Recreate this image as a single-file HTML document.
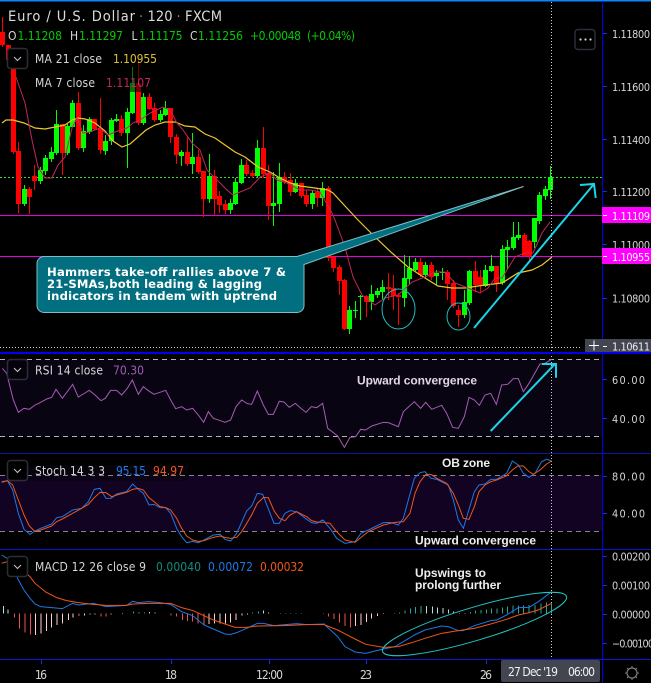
<!DOCTYPE html>
<html><head><meta charset="utf-8"><title>EUR/USD</title>
<style>
html,body{margin:0;padding:0;background:#000;width:651px;height:683px;overflow:hidden}
svg{display:block}
text{font-family:"DejaVu Sans Condensed","Liberation Sans",sans-serif;font-size:12px;fill:#d6d6d6}
text.a{font-size:10.8px;fill:#d6d6d6}
text.b{font-family:"Liberation Sans",sans-serif;font-size:12px;font-weight:bold;fill:#eee}
text.c{font-family:"DejaVu Sans",sans-serif;font-size:11.6px;font-weight:bold;fill:#fff}
text.g{fill:#0c0}
</style></head><body>
<svg width="651" height="683" viewBox="0 0 651 683" xmlns="http://www.w3.org/2000/svg" fill="none">
<rect width="651" height="683" fill="#000"/>
<rect y="0" width="651" height="1.5" fill="#0a84ff"/>
<!-- pane bands -->
<rect x="0" y="359" width="602" height="78" fill="#090412"/>
<rect x="0" y="475" width="602" height="56" fill="#130322"/>
<!-- hlines -->
<path d="M0 215.5H602M0 256.5H602" stroke="#e000e0" stroke-width="1" shape-rendering="crispEdges"/>
<path d="M0 177.5H602" stroke="#2fe02f" stroke-width="1" stroke-dasharray="2 2" shape-rendering="crispEdges"/>
<!-- candles -->
<g shape-rendering="crispEdges">
<path stroke="#f00" stroke-width="1" d="M2.5 17V47M8.5 47V66M13.5 60V154M18.5 142V213M29.5 187V214M34.5 165V190M62.5 124V175M78.5 92V150M94.5 119V130M100.5 98V154M121.5 115V136M138.5 57V125M149.5 93V110M154.5 103V122M170.5 108V143M176.5 134V164M187.5 137V166M198.5 150V174M203.5 171V217M214.5 170V215M219.5 191V213M225.5 200V214M246.5 160V176M252.5 170V178M263.5 127V178M268.5 165V220M284.5 172V184M290.5 173V196M301.5 183V198M306.5 190V207M317.5 189V207M328.5 186V261M333.5 256V272M339.5 265V295M344.5 279V330M366.5 295V317M388.5 273V300M393.5 275V310M398.5 293V325M420.5 258V277M431.5 262V280M447.5 270V300M453.5 280V308M458.5 305V327M475.5 261V292M480.5 270V293M496.5 266V292M524.5 233V257M529.5 240V262"/>
<path stroke="#f00" stroke-width="5" d="M2.5 32V45M8.5 45V60M13.5 66V152M18.5 151V204M29.5 189V197M34.5 176V181M62.5 124V153M78.5 103V148M94.5 119V129M100.5 128V150M121.5 119V133M138.5 83V123M149.5 97V109M154.5 108V120M170.5 108V137M176.5 137V155M187.5 152V164M198.5 157V172M203.5 171V199M214.5 176V199M219.5 196V205M225.5 204V210M246.5 165V174M252.5 173V176M263.5 148V174M268.5 173V206M284.5 177V182M290.5 180V192M301.5 183V196M306.5 195V204M317.5 192V198M328.5 188V258M333.5 257V268M339.5 267V281M344.5 280V329M366.5 296V302M388.5 287V289M393.5 288V296M398.5 295V297M420.5 262V275M431.5 265V277M447.5 272V284M453.5 283V306M458.5 310V315M475.5 271V285M480.5 277V285M496.5 266V283M524.5 235V256M529.5 241V256"/>
<path stroke="#0f0" stroke-width="1" d="M24.5 185V206M40.5 167V184M45.5 155V175M51.5 147V162M56.5 110V155M67.5 124V155M72.5 100V127M83.5 125V152M89.5 117V134M105.5 135V155M111.5 118V145M116.5 114V122M127.5 108V168M132.5 67V114M143.5 93V125M160.5 110V122M165.5 101V116M181.5 150V166M192.5 133V174M209.5 154V203M230.5 199V214M235.5 178V205M241.5 159V184M257.5 140V178M273.5 172V226M279.5 163V212M295.5 179V193M312.5 190V209M322.5 182V206M349.5 306V334M355.5 301V318M360.5 295V320M371.5 285V310M377.5 288V298M382.5 280V300M404.5 255V307M409.5 256V284M415.5 258V271M425.5 262V278M436.5 270V285M442.5 268V280M464.5 290V318M469.5 270V305M485.5 265V287M491.5 255V272M502.5 245V285M507.5 240V270M513.5 222V250M518.5 222V240M534.5 218V248M539.5 192V224M545.5 186V200M550.5 166V199"/>
<path stroke="#0f0" stroke-width="5" d="M24.5 189V204M40.5 170V181M45.5 158V171M51.5 152V159M56.5 124V153M67.5 126V153M72.5 103V127M83.5 131V148M89.5 119V132M105.5 141V151M111.5 120V141M116.5 119V121M127.5 112V133M132.5 83V113M143.5 97V123M160.5 114V120M165.5 108V115M181.5 152V156M192.5 157V164M209.5 176V199M230.5 203V210M235.5 182V204M241.5 165V183M257.5 148V176M273.5 203V206M279.5 177V204M295.5 183V192M312.5 193V204M322.5 188V198M349.5 310V329M355.5 310V311M360.5 296V297M371.5 294V302M377.5 291V295M382.5 287V292M404.5 278V298M409.5 268V279M415.5 262V270M425.5 265V275M436.5 273V276M442.5 272V273M464.5 302V315M469.5 271V303M485.5 270V286M491.5 266V271M502.5 249V283M507.5 247V250M513.5 237V248M518.5 235V238M534.5 218V242M539.5 195V221M545.5 189V196M550.5 177V190"/>
</g>
<!-- MA 21 -->
<path stroke="#eec62e" stroke-width="1.2" d="M2 123L6 120L13 120L24 123L35 128L45 129L55 127L65 125L72 120L78 118L85 119L95 123L105 131L113 141L122 147L130 144L138 137L146 130L155 125L165 122L175 122L185 126L195 127L205 134L215 138L225 145L235 152L245 157L258 167L270 172L280 178L290 183L300 186L315 188L328 190L333 193L345 206L358 220L375 237L392 253L408 267L425 278L438 286L452 288L465 288L485 285L502 283L518 273L532 270L542 265L552 257"/>
<!-- MA 7 -->
<path stroke="#c2265f" stroke-width="1" d="M16 77L25 103L32 140L38 167L45 178L52 178L58 165L65 157L72 128L77 118L83 133L90 132L100 128L108 135L115 132L127 128L133 123L140 120L150 113L163 107L170 110L177 123L183 130L192 143L200 150L207 170L217 180L227 190L233 195L240 192L250 188L260 177L270 173L277 180L287 183L300 190L310 190L320 192L332 213L335 220L345 247L353 277L362 295L375 305L385 298L398 295L412 282L425 277L435 272L445 272L455 283L468 288L480 293L488 288L495 278L502 278L515 257L525 253L533 253L542 233L550 222"/>
<!-- crosshair -->
<path d="M551.5 2V660" stroke="#cfcfcf" stroke-width="1" stroke-dasharray="1 2" shape-rendering="crispEdges"/>
<path d="M0 347.5H582" stroke="#cfcfcf" stroke-width="1" stroke-dasharray="1 2" shape-rendering="crispEdges"/>
<!-- callout -->
<path d="M297 256.5L523.5 186.5L304 264.5V305.5a7 7 0 0 1-7 7H44a7 7 0 0 1-7-7V263.5a7 7 0 0 1 7-7Z" fill="#026f80" stroke="#7fbfc4" stroke-width="1"/>
<text class="c" x="47" y="276" textLength="239" lengthAdjust="spacing">Hammers take-off rallies above 7 &amp;</text>
<text class="c" x="47" y="288" textLength="215" lengthAdjust="spacing">21-SMAs,both leading &amp; lagging</text>
<text class="c" x="47" y="300" textLength="230" lengthAdjust="spacing">indicators in tandem with uptrend</text>
<!-- circles -->
<ellipse cx="398.5" cy="309" rx="16.5" ry="20" stroke="#22bcc4" stroke-width="1"/>
<ellipse cx="458.5" cy="316.5" rx="11.5" ry="13.5" stroke="#22bcc4" stroke-width="1"/>
<!-- arrow main -->
<path d="M474 328L594 184M580 185L594 184L595.7 198" stroke="#19d5e8" stroke-width="2"/>
<!-- RSI -->
<path d="M0 359.5H602M0 436.5H602" stroke="#b4b4b4" stroke-width="1" stroke-dasharray="5 4" shape-rendering="crispEdges"/>
<path transform="translate(0,220) scale(.33333)" stroke="#a45cb4" stroke-width="3" d="M7 445L20 460L40 540L55 577L72 565L88 568L105 555L120 548L140 537L155 532L168 508L187 535L218 493L235 531L250 522L268 511L285 525L303 542L316 535L332 511L350 511L365 525L382 505L397 480L415 523L430 500L445 512L462 523L480 517L497 511L512 540L527 566L545 560L560 570L578 565L595 585L611 607L625 575L640 595L658 601L675 607L692 600L708 560L725 540L742 551L755 553L772 513L790 555L805 583L820 583L838 544L852 546L868 562L886 550L903 565L918 577L934 560L950 563L968 550L975 585"/>
<path transform="translate(325,220) scale(.33333)" stroke="#a45cb4" stroke-width="3" d="M0 585L8 625L38 648L58 682L75 652L92 650L107 628L122 630L140 618L175 607L190 608L220 620L235 575L268 545L287 565L302 547L320 568L350 556L365 580L383 622L400 625L418 590L432 532L448 540L463 556L480 525L497 520L514 553L530 495L548 493L565 476L580 476L595 515L612 490L645 432L660 430L680 418"/>
<path d="M490.7 431L555 364M542 364H556V377.7" stroke="#19d5e8" stroke-width="2"/>
<text class="b" x="357" y="384.5" style="fill:#e2d4e6" textLength="120" lengthAdjust="spacing">Upward convergence</text>
<!-- Stoch -->
<rect x="28" y="465" width="160" height="16" fill="#0a0410" opacity=".7"/>
<path d="M0 475.5H602M0 531.5H602" stroke="#8a8094" stroke-width="1" stroke-dasharray="5 4" shape-rendering="crispEdges"/>
<g transform="translate(0,450) scale(.33333)" stroke-width="3">
<path stroke="#1e78e6" d="M5 95L22 92L38 120L55 190L72 238L90 253L105 243L122 235L155 222L170 203L187 200L218 180L245 175L265 155L283 118L300 115L318 145L333 145L350 132L380 125L398 102L415 118L430 130L447 165L462 163L480 173L497 173L512 190L530 235L545 260L560 278L578 274L595 278L612 270L640 255L660 253L675 268L692 273L710 250L740 183L755 168L772 130L788 133L822 220L838 220L855 190L870 182L890 185L920 208L935 218L950 220L968 210L975 215"/>
<path stroke="#f0561a" d="M5 97L22 92L38 105L55 150L72 195L88 228L105 245L122 240L155 228L170 215L187 207L218 190L245 175L265 163L283 143L300 127L318 128L335 140L350 135L380 127L398 118L415 115L430 120L447 143L462 155L480 170L497 173L512 180L530 205L545 235L560 258L578 270L595 274L612 272L640 262L660 258L675 262L692 265L710 262L725 245L755 195L772 160L790 143L805 143L822 182L838 205L855 212L870 195L890 185L920 200L935 212L950 216L975 217"/>
</g>
<g transform="translate(325,450) scale(.33333)" stroke-width="3">
<path stroke="#1e78e6" d="M0 218L15 235L35 265L60 280L90 275L108 250L130 240L175 218L195 217L220 225L235 205L250 150L268 85L285 68L300 65L318 85L335 88L370 105L385 150L400 210L415 235L430 185L448 125L462 105L480 102L497 88L515 88L545 70L562 33L580 45L595 70L612 82L630 70L650 35L665 28L680 33"/>
<path stroke="#f0561a" d="M0 218L15 220L35 245L60 270L90 277L108 262L130 245L175 225L205 218L235 215L255 190L270 130L285 95L303 73L318 73L335 85L365 100L385 130L400 165L415 205L432 208L448 170L462 125L480 105L497 95L515 90L545 77L562 60L578 48L595 48L612 65L625 73L645 60L665 42L680 33"/>
</g>
<text class="b" x="442" y="467" textLength="48" lengthAdjust="spacing">OB zone</text>
<text class="b" x="415" y="544.5" textLength="121" lengthAdjust="spacing">Upward convergence</text>
<!-- MACD hist -->
<g transform="translate(0,450) scale(.33333)" stroke-width="3" shape-rendering="crispEdges">
<path stroke="#b2dfdb" d="M10 490V468M24 490V478M449 490V486M465 490V487M806 490V488M790 490V482"/>
<path stroke="#26a69a" d="M400 490V484M417 490V486M433 490V488M758 490V488M775 490V484M842 491V489M858 491V489M872 491V489M888 491V489M904 491V489M970 491V489"/>
<path stroke="#ef5350" d="M43 490V503M59 490V535M75 490V547M91 490V553M237 490V498M303 490V500M318 490V500M513 490V496M530 490V500M547 490V510M562 490V513M578 490V515M594 490V520M612 490V523"/>
<path stroke="#ffcdd2" d="M107 490V555M123 490V550M139 490V543M155 490V533M171 490V525M187 490V520M205 490V510M219 490V503M253 490V497M270 490V493M285 490V493M333 490V494M367 490V492M627 490V522M643 490V520M660 490V520M676 490V521M692 490V518M708 490V510M726 490V496M742 490V494"/>
</g>
<g transform="translate(325,450) scale(.33333)" stroke-width="3" shape-rendering="crispEdges">
<path stroke="#ef5350" d="M10 490V500M27 490V507M43 490V518M60 490V528M77 490V533"/>
<path stroke="#ffcdd2" d="M92 490V528M108 490V525M124 490V516M140 490V506M157 490V498M175 490V492"/>
<path stroke="#26a69a" d="M208 490V492M224 490V488M240 490V481M256 490V475M272 490V471M288 490V468M436 490V486M452 490V482M468 490V480M484 490V478M500 490V476M516 490V475M532 490V472M548 490V470M564 490V466M580 490V466M596 490V467M612 490V465M630 490V465M648 490V460M664 490V458M680 490V460"/>
<path stroke="#b2dfdb" d="M305 490V468M322 490V470M338 490V472M354 490V474M370 490V478M386 490V484M403 491V489M420 491V489"/>
</g>
<!-- MACD lines -->
<g transform="translate(0,450) scale(.33333)" stroke-width="3">
<path stroke="#1e78e6" d="M5 315L22 325L38 345L55 390L72 420L90 445L105 462L122 470L155 473L187 476L218 460L235 465L280 460L318 470L380 466L398 454L415 458L445 455L480 458L512 463L545 485L578 497L612 525L640 537L675 552L692 553L710 548L740 535L772 520L790 520L822 527L890 521L920 524L975 522"/>
<path stroke="#f0561a" d="M5 340L22 335L55 350L90 380L105 400L137 426L170 443L200 452L235 458L280 463L318 466L380 466L398 462L445 460L512 460L545 473L580 482L612 497L640 510L675 522L705 532L740 532L772 528L850 527L920 524L975 524"/>
</g>
<g transform="translate(325,450) scale(.33333)" stroke-width="3">
<path stroke="#1e78e6" d="M0 525L38 560L60 590L90 606L122 610L175 597L210 590L235 575L268 555L300 540L350 528L370 530L400 542L415 542L448 527L497 512L515 510L545 495L580 473L612 472L640 455L680 425"/>
<path stroke="#f0561a" d="M0 525L38 540L90 567L122 583L175 592L220 590L260 578L300 565L350 550L400 542L448 535L497 522L545 508L580 495L612 488L640 480L680 460"/>
</g>
<ellipse cx="474.5" cy="624" rx="96" ry="16.5" transform="rotate(-16.6 474.5 624)" stroke="#22c4c4" stroke-width="1"/>
<text class="b" x="415" y="577" textLength="71" lengthAdjust="spacing">Upswings to</text>
<text class="b" x="415" y="589" textLength="86" lengthAdjust="spacing">prolong further</text>
<!-- separators -->
<g shape-rendering="crispEdges">
<rect x="0" y="352" width="651" height="2" fill="#0000f0"/>
<rect x="0" y="453" width="651" height="1" fill="#0c16a8"/>
<rect x="0" y="549" width="651" height="1" fill="#0c16d8"/>
<rect x="0" y="659" width="651" height="1" fill="#0c16d8"/>
<rect x="602" y="1" width="1" height="682" fill="#0000f0"/>
<path stroke="#1a2ce0" stroke-width="1" d="M603 33.5H607M603 86.5H607M603 139.5H607M603 191.5H607M603 244.5H607M603 298.5H607M603 379.5H607M603 418.5H607M603 476.5H607M603 513.5H607M603 556.5H607M603 585.5H607M603 614.5H607M603 643.5H607M41.5 660V664M171.5 660V664M269.5 660V664M366.5 660V664M486.5 660V664"/>
</g>
<!-- legend dim -->
<rect x="30" y="50" width="130" height="42" fill="#000" opacity=".55"/>
<text x="8" y="21" style="font-size:14.5px;fill:#dcdcdc" textLength="127" lengthAdjust="spacing">Euro / U.S. Dollar</text>
<text x="139" y="21" style="font-size:14.5px;fill:#888">·</text>
<text x="147.5" y="21" style="font-size:14.5px;fill:#dcdcdc" textLength="25" lengthAdjust="spacing">120</text>
<text x="176.5" y="21" style="font-size:14.5px;fill:#888">·</text>
<text x="185" y="21" style="font-size:14.5px;fill:#dcdcdc" textLength="37" lengthAdjust="spacing">FXCM</text>
<text x="8" y="40">O</text><text class="g" x="17.5" y="40" textLength="44.5" lengthAdjust="spacing">1.11208</text>
<text x="70" y="40">H</text><text class="g" x="79" y="40" textLength="44" lengthAdjust="spacing">1.11297</text>
<text x="131.5" y="40">L</text><text class="g" x="139" y="40" textLength="43.5" lengthAdjust="spacing">1.11175</text>
<text x="190" y="40">C</text><text class="g" x="198" y="40" textLength="45" lengthAdjust="spacing">1.11256</text>
<text class="g" x="250" y="40" textLength="51" lengthAdjust="spacing">+0.00048</text>
<text class="g" x="307" y="40" textLength="48" lengthAdjust="spacing">(+0.04%)</text>
<g stroke="#2a2e39" stroke-width="1.5">
<rect x="7.5" y="48.5" width="20" height="20" rx="3" fill="#000"/>
<rect x="7.5" y="359.5" width="20" height="20" rx="3" fill="#05020c"/>
<rect x="7.5" y="460.5" width="20" height="20" rx="3" fill="#000"/>
<rect x="7.5" y="556.5" width="20" height="20" rx="3" fill="#000"/>
<rect x="575" y="29.5" width="20" height="20" rx="3" fill="#000"/>
</g>
<path d="M14 57L17.5 60.5L21 57M14 368L17.5 371.5L21 368M14 469L17.5 472.5L21 469M14 565L17.5 568.5L21 565" stroke="#c8c8c8" stroke-width="1"/>
<g fill="#d0d0d0"><circle cx="580.5" cy="39.5" r="1.1"/><circle cx="585.5" cy="39.5" r="1.1"/><circle cx="590.5" cy="39.5" r="1.1"/></g>
<text x="35" y="63" textLength="67" lengthAdjust="spacing">MA 21 close</text>
<text x="113" y="63" style="fill:#d9c035" textLength="44" lengthAdjust="spacing">1.10955</text>
<text x="35" y="87" textLength="60" lengthAdjust="spacing">MA 7 close</text>
<text x="106" y="87" style="fill:#c2265f" textLength="45" lengthAdjust="spacing">1.11107</text>
<text x="35" y="374.5" textLength="68" lengthAdjust="spacing">RSI 14 close</text>
<text x="113" y="374.5" style="fill:#9c5cb0" textLength="31" lengthAdjust="spacing">70.30</text>
<text x="35" y="475" textLength="70" lengthAdjust="spacing">Stoch 14 3 3</text>
<text x="116" y="475" style="fill:#1e78e6" textLength="30" lengthAdjust="spacing">95.15</text>
<text x="153" y="475" style="fill:#f0561a" textLength="31" lengthAdjust="spacing">94.97</text>
<text x="35" y="571" textLength="111" lengthAdjust="spacing">MACD 12 26 close 9</text>
<text x="156" y="571" style="fill:#0f8d80" textLength="45" lengthAdjust="spacing">0.00040</text>
<text x="208" y="571" style="fill:#1e78e6" textLength="45" lengthAdjust="spacing">0.00072</text>
<text x="260" y="571" style="fill:#f0561a" textLength="44" lengthAdjust="spacing">0.00032</text>
<!-- price axis -->
<text class="a" x="612" y="38" textLength="38" lengthAdjust="spacing">1.11800</text>
<text class="a" x="612" y="91" textLength="38" lengthAdjust="spacing">1.11600</text>
<text class="a" x="612" y="144" textLength="38" lengthAdjust="spacing">1.11400</text>
<text class="a" x="612" y="196" textLength="38" lengthAdjust="spacing">1.11200</text>
<text class="a" x="612" y="249" textLength="38" lengthAdjust="spacing">1.11000</text>
<text class="a" x="612" y="302.5" textLength="38" lengthAdjust="spacing">1.10800</text>
<rect x="602" y="207" width="49" height="16" fill="#f0f"/>
<rect x="602" y="248" width="49" height="16" fill="#f0f"/>
<path d="M603 215.5H607M603 256.5H607" stroke="#fff" stroke-width="1"/>
<text class="a" x="612" y="220" textLength="38" lengthAdjust="spacing" style="fill:#fff">1.11109</text>
<text class="a" x="612" y="261" textLength="38" lengthAdjust="spacing" style="fill:#fff">1.10955</text>
<rect x="585" y="339" width="66" height="13" fill="#434651"/>
<path d="M589 345.5H599M593.9 340.5V350.5" stroke="#fff" stroke-width="1.2" shape-rendering="crispEdges"/>
<path d="M603 346.5H607" stroke="#fff" stroke-width="1"/>
<text class="a" x="612" y="350.5" textLength="38" lengthAdjust="spacing" style="fill:#eee">1.10611</text>
<text class="a" x="612" y="384" textLength="33" lengthAdjust="spacing">60.00</text>
<text class="a" x="612" y="423" textLength="33" lengthAdjust="spacing">40.00</text>
<text class="a" x="612" y="480.5" textLength="33" lengthAdjust="spacing">80.00</text>
<text class="a" x="612" y="517.5" textLength="33" lengthAdjust="spacing">40.00</text>
<text class="a" x="612" y="560.5" textLength="38" lengthAdjust="spacing">0.00200</text>
<text class="a" x="612" y="589.5" textLength="38" lengthAdjust="spacing">0.00100</text>
<text class="a" x="612" y="618.5" textLength="38" lengthAdjust="spacing">0.00000</text>
<text class="a" x="612" y="647.5" textLength="42" lengthAdjust="spacing">−0.00100</text>
<!-- time axis -->
<text x="35" y="679" textLength="12" lengthAdjust="spacing">16</text>
<text x="165" y="679" textLength="12" lengthAdjust="spacing">18</text>
<text x="256" y="679" textLength="27" lengthAdjust="spacing">12:00</text>
<text x="360" y="679" textLength="12" lengthAdjust="spacing">23</text>
<text x="480" y="679" textLength="12" lengthAdjust="spacing">26</text>
<rect x="501" y="660" width="99" height="22" rx="2" fill="#434651"/>
<text x="508" y="676" style="fill:#f0f0f0" textLength="50" lengthAdjust="spacing">27 Dec '19</text>
<text x="568" y="676" style="fill:#f0f0f0" textLength="27" lengthAdjust="spacing">06:00</text>
<!-- gear -->
<circle cx="632" cy="673" r="5" stroke="#7c7c7c" stroke-width="1.2"/>
<path d="M632 666V668M632 678V680M625 673H627M637 673H639M627 668L628.4 669.4M635.6 676.6L637 678M637 668L635.6 669.4M628.4 676.6L627 678" stroke="#7c7c7c" stroke-width="1"/>
</svg>
</body></html>
